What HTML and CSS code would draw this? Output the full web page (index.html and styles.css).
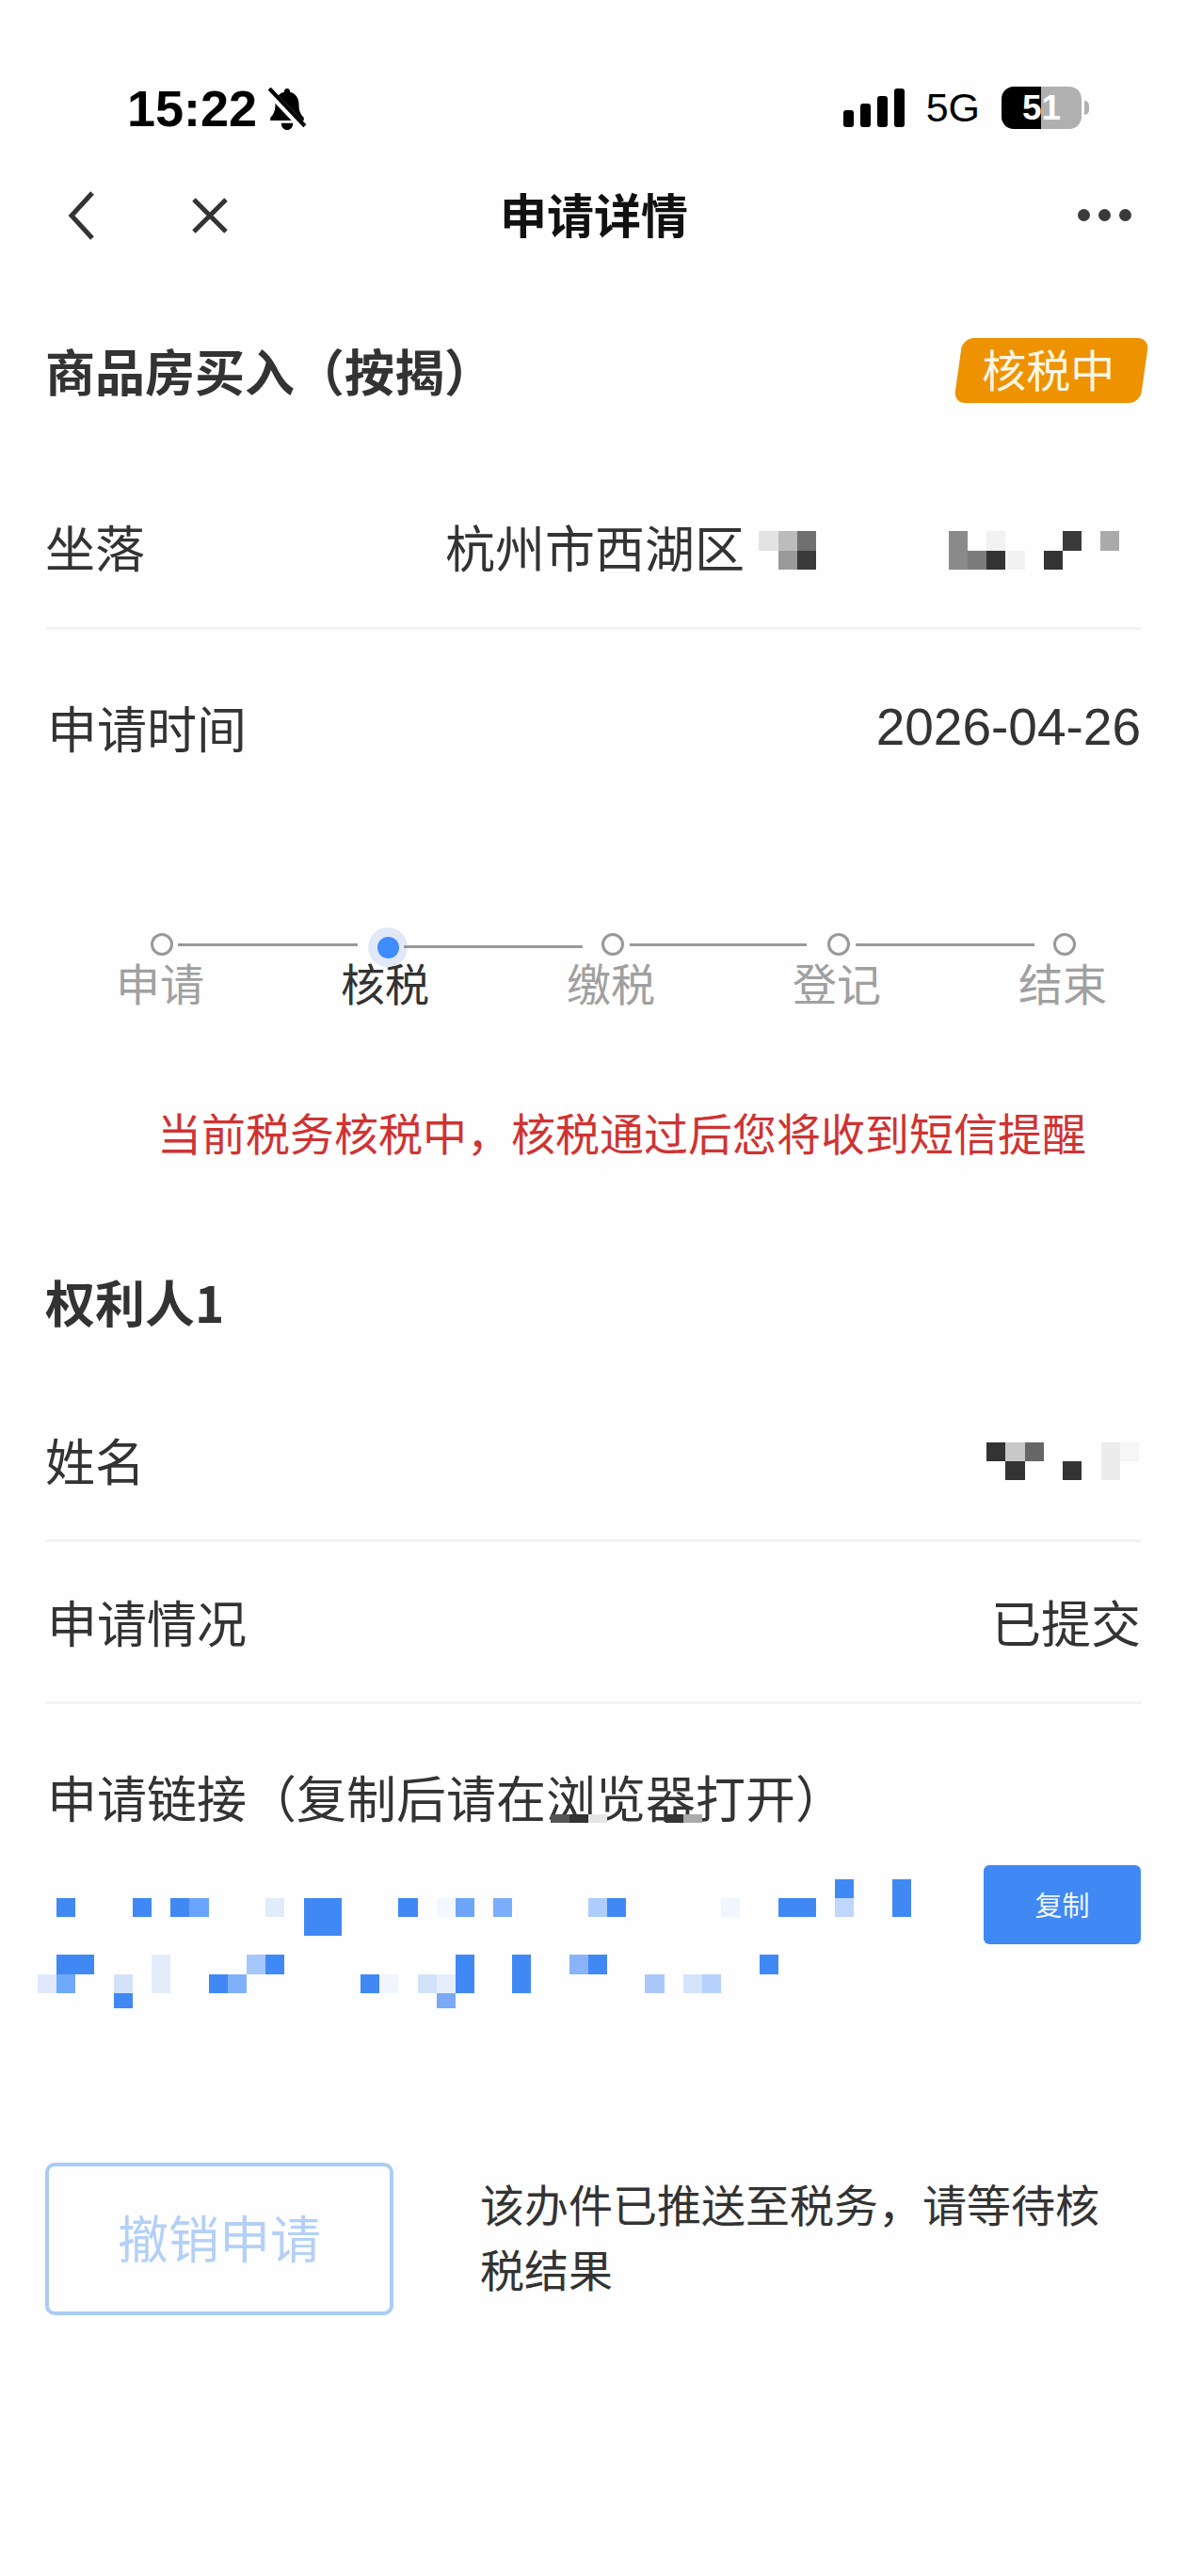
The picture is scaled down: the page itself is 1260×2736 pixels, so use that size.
FILE: index.html
```html
<!DOCTYPE html>
<html lang="zh-CN">
<head>
  <meta charset="UTF-8" />
  <meta name="viewport" content="width=device-width, initial-scale=1.0" />
  <title>申请详情</title>
  <link rel="stylesheet" href="styles.css">
</head>
<body>
  <div class="status-bar">
    <div class="status-left">
      <span class="clock">15:22</span>
      <svg class="bell" width="44" height="46" viewBox="0 0 42 44">
        <path d="M21 1c2 0 3 1.500 3 3.500 6 1.500 9 6.500 9 13 0 7 2 10 5 13v3H4v-3c3-3 5-6 5-13 0-6.500 3-11.500 9-13C18 2.500 19 1 21 1z" fill="#000"/>
        <path d="M15 36h12c0 4-2.500 7-6 7s-6-3-6-7z" fill="#000"/>
        <path d="M3 4l36 38" stroke="#fefefe" stroke-width="8"/>
        <path d="M3 1l36 38" stroke="#000" stroke-width="4"/>
      </svg>
    </div>
    <div class="status-right">
      <div class="signal">
        <span class="bar bar-1"></span>
        <span class="bar bar-2"></span>
        <span class="bar bar-3"></span>
        <span class="bar bar-4"></span>
      </div>
      <span class="network">5G</span>
      <div class="battery">
        <span class="battery-body">51</span>
        <span class="battery-nub"></span>
      </div>
    </div>
  </div>

  <div class="nav">
    <div class="nav-left">
      <svg width="30" height="52" viewBox="0 0 30 52">
        <path d="M27 2L5 26l22 24" fill="none" stroke="#333" stroke-width="5"/>
      </svg>
      <svg width="40" height="40" viewBox="0 0 40 40">
        <path d="M3 3l34 34M37 3L3 37" fill="none" stroke="#333" stroke-width="5"/>
      </svg>
    </div>
    <div class="nav-title">申请详情</div>
    <div class="nav-right">
      <span class="more-dot"></span>
      <span class="more-dot"></span>
      <span class="more-dot"></span>
    </div>
  </div>

  <div class="title-row">
    <h1 class="section-title">商品房买入（按揭）</h1>
    <span class="badge"><span class="badge-text">核税中</span></span>
  </div>

  <div class="row row-address">
    <span>坐落</span>
    <span class="value-wrap">
      <span>杭州市西湖区</span>
      <svg class="mosaic" width="384" height="72" shape-rendering="crispEdges">
        <rect x="0" y="20" width="21" height="21" fill="#e3e3e3"/>
        <rect x="21" y="20" width="20" height="21" fill="#bcbcbc"/>
        <rect x="41" y="20" width="20" height="21" fill="#707070"/>
        <rect x="21" y="41" width="20" height="20" fill="#9a9a9a"/>
        <rect x="41" y="41" width="20" height="20" fill="#3a3a3a"/>
        <rect x="202" y="20" width="20" height="41" fill="#8a8a8a"/>
        <rect x="222" y="41" width="20" height="20" fill="#7b7b7b"/>
        <rect x="242" y="41" width="20" height="20" fill="#333"/>
        <rect x="242" y="20" width="20" height="21" fill="#f2f2f2"/>
        <rect x="262" y="41" width="21" height="20" fill="#f2f2f2"/>
        <rect x="323" y="20" width="20" height="21" fill="#3a3a3a"/>
        <rect x="303" y="41" width="20" height="20" fill="#333"/>
        <rect x="363" y="20" width="20" height="21" fill="#aaa"/>
      </svg>
    </span>
  </div>

  <div class="row row-time">
    <span class="label">申请时间</span>
    <span class="date">2026-04-26</span>
  </div>

  <div class="stepper">
    <div class="track">
      <span class="dot"></span>
      <span class="line line-1"></span>
      <span class="dot-active"><span class="dot-inner"></span></span>
      <span class="line line-2"></span>
      <span class="dot"></span>
      <span class="line line-3"></span>
      <span class="dot"></span>
      <span class="line line-4"></span>
      <span class="dot"></span>
    </div>
    <div class="step-labels">
      <span class="first">申请</span>
      <span class="current">核税</span>
      <span>缴税</span>
      <span>登记</span>
      <span>结束</span>
    </div>
  </div>

  <p class="tip">当前税务核税中，核税通过后您将收到短信提醒</p>

  <h2 class="section-title person">权利人1</h2>

  <div class="row row-name">
    <span>姓名</span>
    <svg class="mosaic" width="164" height="72" shape-rendering="crispEdges">
      <rect x="0" y="18" width="20" height="20" fill="#333"/>
      <rect x="20" y="18" width="21" height="20" fill="#c8c8c8"/>
      <rect x="41" y="18" width="20" height="20" fill="#666"/>
      <rect x="122" y="18" width="20" height="40" fill="#ececec"/>
      <rect x="142" y="18" width="20" height="20" fill="#f6f6f6"/>
      <rect x="20" y="38" width="21" height="20" fill="#333"/>
      <rect x="81" y="38" width="20" height="20" fill="#333"/>
    </svg>
  </div>

  <div class="row row-state">
    <span class="label">申请情况</span>
    <span>已提交</span>
  </div>

  <div class="row row-link">
    <span class="label">申请链接（复制后请在浏览器打开）</span>
    <svg class="link-cover" width="170" height="9" shape-rendering="crispEdges">
      <rect x="0" y="0" width="20" height="9" fill="#555"/>
      <rect x="20" y="0" width="20" height="9" fill="#333"/>
      <rect x="40" y="0" width="20" height="9" fill="#e5e5e5"/>
      <rect x="122" y="0" width="19" height="9" fill="#333"/>
      <rect x="141" y="0" width="20" height="9" fill="#aaa"/>
    </svg>
  </div>

  <div class="link-block">
    <svg class="link-mosaic" width="950" height="152" shape-rendering="crispEdges">
      <g fill="#4089f5">
        <rect x="20" y="35" width="20" height="20"/>
        <rect x="101" y="35" width="20" height="20"/>
        <rect x="141" y="35" width="20" height="20"/>
        <rect x="283" y="35" width="40" height="40"/>
        <rect x="383" y="35" width="21" height="20"/>
        <rect x="605" y="35" width="20" height="20"/>
        <rect x="787" y="35" width="40" height="20"/>
        <rect x="847" y="15" width="20" height="20"/>
        <rect x="908" y="15" width="20" height="40"/>
        <rect x="20" y="95" width="40" height="21"/>
        <rect x="242" y="95" width="20" height="21"/>
        <rect x="444" y="95" width="20" height="41"/>
        <rect x="504" y="95" width="20" height="41"/>
        <rect x="585" y="95" width="20" height="21"/>
        <rect x="767" y="95" width="20" height="21"/>
        <rect x="81" y="136" width="20" height="16"/>
        <rect x="182" y="116" width="20" height="20"/>
        <rect x="343" y="116" width="20" height="20"/>
      </g>
      <rect x="161" y="35" width="21" height="20" fill="#6aa4ff"/>
      <rect x="242" y="35" width="20" height="20" fill="#e0ecfc"/>
      <rect x="424" y="35" width="20" height="20" fill="#f4f8fe"/>
      <rect x="444" y="35" width="20" height="20" fill="#6da5fa"/>
      <rect x="484" y="35" width="20" height="20" fill="#7aaefb"/>
      <rect x="585" y="35" width="20" height="20" fill="#aecdfb"/>
      <rect x="726" y="35" width="20" height="20" fill="#f0f5fe"/>
      <rect x="847" y="35" width="20" height="20" fill="#c0d7fc"/>
      <rect x="121" y="95" width="20" height="41" fill="#e3edfc"/>
      <rect x="222" y="95" width="20" height="21" fill="#a5c7fb"/>
      <rect x="565" y="95" width="20" height="21" fill="#89b4f9"/>
      <rect x="0" y="116" width="20" height="20" fill="#dfe9fb"/>
      <rect x="20" y="116" width="20" height="20" fill="#6ea8fb"/>
      <rect x="81" y="116" width="20" height="20" fill="#d3e2fa"/>
      <rect x="202" y="116" width="20" height="20" fill="#7fb0fa"/>
      <rect x="363" y="116" width="20" height="20" fill="#f0f5fe"/>
      <rect x="404" y="116" width="20" height="20" fill="#d1e2fb"/>
      <rect x="424" y="116" width="20" height="20" fill="#e5eefc"/>
      <rect x="424" y="136" width="20" height="16" fill="#7aaaf5"/>
      <rect x="645" y="116" width="21" height="20" fill="#a9c9fa"/>
      <rect x="686" y="116" width="20" height="20" fill="#d5e4fb"/>
      <rect x="706" y="116" width="20" height="20" fill="#b6d1fb"/>
    </svg>
    <button class="copy-btn" type="button">复制</button>
  </div>

  <div class="footer">
    <button class="cancel-btn" type="button">撤销申请</button>
    <p class="footer-note">该办件已推送至税务，请等待核税结果</p>
  </div>
</body>
</html>
```

FILE: styles.css
```css
* {
  box-sizing: border-box;
}
body {
  margin: 0;
  width: 1260px;
  height: 2736px;
  overflow: hidden;
  background-color: #fefefe;
  color: #333;
  font-family: "Noto Sans CJK SC", "Liberation Sans", sans-serif;
  font-size: 53px;
}

/* status bar */
.status-bar {
  height: 169px;
  padding: 89px 103px 0 135px;
  display: flex;
  justify-content: space-between;
  align-items: flex-start;
  color: #000;
}
.status-left {
  display: flex;
  align-items: center;
  gap: 10px;
  height: 52px;
}
.clock {
  font-family: "Liberation Sans", sans-serif;
  font-weight: 700;
  font-size: 54px;
  line-height: 52px;
}
.bell {
  margin-top: 1px;
}
.status-right {
  display: flex;
  align-items: center;
  height: 48px;
  margin-top: 1px;
}
.signal {
  display: flex;
  align-items: flex-end;
  gap: 7px;
  height: 41px;
  margin-right: 23px;
}
.bar {
  width: 11px;
  background-color: #000;
  border-radius: 3px;
}
.bar-1 { height: 18px; }
.bar-2 { height: 25px; }
.bar-3 { height: 33px; }
.bar-4 { height: 41px; }
.network {
  font-family: "Liberation Sans", sans-serif;
  font-size: 43px;
  line-height: 48px;
  margin-right: 23px;
}
.battery {
  display: flex;
  align-items: center;
  gap: 3px;
}
.battery-body {
  width: 85px;
  height: 45px;
  border-radius: 13px;
  background: linear-gradient(to right, #000 50%, #b0b0b0 50%);
  color: #fff;
  font-family: "Liberation Sans", sans-serif;
  font-weight: 700;
  font-size: 37px;
  line-height: 45px;
  text-align: center;
}
.battery-nub {
  width: 5px;
  height: 15px;
  border-radius: 0 5px 5px 0;
  background-color: #b0b0b0;
}

/* nav */
.nav {
  height: 120px;
  padding: 0 58px 6px 71px;
  display: grid;
  grid-template-columns: 460px auto 1fr;
  align-items: center;
}
.nav-left {
  display: flex;
  align-items: center;
  gap: 102px;
  margin-top: 5px;
}
.nav-title {
  font-size: 50px;
  font-weight: 700;
  line-height: 60px;
  color: #111;
}
.nav-right {
  display: flex;
  justify-content: flex-end;
  gap: 9px;
  margin-top: 5px;
}
.more-dot {
  width: 13px;
  height: 13px;
  border-radius: 50%;
  background-color: #3a3a3a;
}

/* headings */
.title-row {
  display: flex;
  justify-content: space-between;
  align-items: center;
  margin: 69px 44px 0 48px;
  height: 70px;
}
.section-title {
  margin: 0;
  font-size: 53px;
  font-weight: 700;
  line-height: 72px;
  color: #333;
}
.badge {
  width: 198px;
  height: 69px;
  padding-bottom: 6px;
  padding-right: 8px;
  border-radius: 12px;
  background-color: #ee9200;
  transform: skewX(-8deg);
  display: flex;
  align-items: center;
  justify-content: center;
}
.badge-text {
  color: #fdf6e6;
  font-size: 47px;
  line-height: 60px;
  transform: skewX(8deg);
}

/* rows */
.row {
  margin: 0 48px;
  display: flex;
  justify-content: space-between;
  align-items: center;
  line-height: 72px;
  border-bottom: 3px solid #f3f3f3;
}
.row .label {
  padding-left: 2px;
}
.row-address {
  margin-top: 116px;
  padding-bottom: 50px;
}
.value-wrap {
  display: flex;
  align-items: center;
  gap: 15px;
}
.mosaic {
  display: block;
}
.value-wrap .mosaic {
  margin-right: 22px;
}
.row-time {
  padding-top: 67px;
  border-bottom: none;
}
.date {
  font-family: "Liberation Sans", sans-serif;
  font-size: 55px;
}

/* stepper */
.stepper {
  margin: 174px 9px 0 51px;
}
.track {
  display: flex;
  align-items: center;
  height: 42px;
  padding-left: 109px;
}
.dot {
  flex: none;
  width: 24px;
  height: 24px;
  border: 3px solid #999;
  border-radius: 50%;
}
.dot-active {
  flex: none;
  width: 42px;
  height: 42px;
  margin-top: 6px;
  margin-left: 11px;
  border-radius: 50%;
  background-color: #e1e8f8;
  display: flex;
  align-items: center;
  justify-content: center;
}
.dot-inner {
  width: 23px;
  height: 23px;
  border-radius: 50%;
  background-color: #3f8cff;
}
.line {
  flex: none;
  height: 3px;
  background-color: #999;
}
.line-1 { width: 191px; margin-left: 5px; }
.line-2 { width: 190px; margin-left: -4px; margin-top: 5px; margin-right: 20px; }
.line-3 { width: 188px; margin-left: 6px; margin-right: 22px; }
.line-4 { width: 190px; margin-left: 6px; margin-right: 20px; }
.step-labels {
  display: grid;
  grid-template-columns: repeat(5, 240px);
  margin: -4px 0 0 -2px;
  font-size: 47px;
  line-height: 46px;
  color: #a0a0a0;
  text-align: center;
}
.step-labels .first {
  padding-left: 2px;
}
.step-labels .current {
  color: #333;
}

.tip {
  margin: 106px 0 0;
  padding-left: 167px;
  font-size: 47px;
  line-height: 60px;
  color: #cf3333;
}

.person {
  margin: 114px 48px 0;
}
.row-name {
  margin-top: 96px;
  padding-bottom: 49px;
}
.row-state {
  padding-top: 48px;
  padding-bottom: 49px;
}
.row-link {
  position: relative;
  padding-top: 62px;
  border-bottom: none;
  justify-content: flex-start;
}
.link-cover {
  position: absolute;
  left: 537px;
  top: 117px;
}

/* link */
.link-block {
  margin: 37px 48px 0 40px;
  display: flex;
  justify-content: space-between;
  align-items: flex-start;
}
.link-mosaic {
  display: block;
}
.copy-btn {
  width: 167px;
  height: 84px;
  border: none;
  border-radius: 6px;
  background-color: #4089f5;
  color: #f2f6fe;
  font-family: inherit;
  font-size: 29px;
  padding: 0 0 3px;
}

/* footer */
.footer {
  margin: 164px 48px 0 48px;
  display: flex;
  align-items: flex-start;
}
.cancel-btn {
  flex: none;
  width: 370px;
  height: 162px;
  border: 4px solid #a9ccf6;
  border-radius: 10px;
  background-color: #fefefe;
  color: #b4d0f6;
  font-family: inherit;
  font-size: 54px;
  padding: 0 0 6px;
}
.footer-note {
  margin: 8px 0 0 92px;
  width: 680px;
  font-size: 47px;
  line-height: 69px;
}
```
